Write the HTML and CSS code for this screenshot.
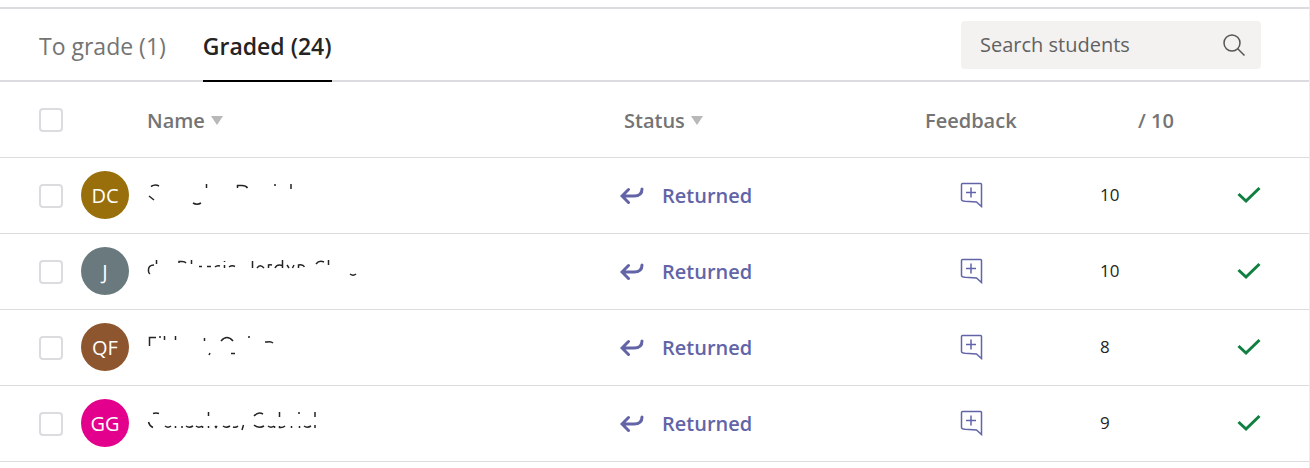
FILE: index.html
```
<!DOCTYPE html>
<html lang="en">

<head>
  <meta charset="UTF-8" />
  <meta name="viewport" content="width=device-width, initial-scale=1.0" />
  <title>Graded</title>
  <link rel="stylesheet" href="styles.css">
</head>

<body>
  <svg class="sprite" aria-hidden="true">
    <symbol id="icon-return" viewBox="0 0 24 18">
      <path d="M8.500 2.500 L2 9 L8.500 15.500 M2.500 9 H14 C19 9 22 6.500 22 2" />
    </symbol>
    <symbol id="icon-feedback" viewBox="0 0 24 26">
      <path d="M2.500 1.500 H20.500 Q21.500 1.500 21.500 2.500 V24.500 L16.500 20 L5 19.300 Q1.500 19 1.500 17.500 V2.500 Q1.500 1.500 2.500 1.500 Z M11 5.500 V15.500 M6 10.500 H16" />
    </symbol>
    <symbol id="icon-check" viewBox="0 0 24 18">
      <path d="M1.500 8 L9 15 L22.500 2" />
    </symbol>
  </svg>

  <main class="container">
    <header class="toolbar">
      <nav class="tabs">
        <button type="button" class="tab">To grade (1)</button>
        <button type="button" class="tab active">Graded (24)</button>
      </nav>
      <form class="search">
        <input type="text" placeholder="Search students" aria-label="Search students" />
        <button type="submit" aria-label="Search">
          <svg viewBox="0 0 24 24" width="24" height="24">
            <circle cx="10" cy="10" r="8" />
            <path d="M15.700 15.700 L22.500 22.500" />
          </svg>
        </button>
      </form>
    </header>

    <table class="grades">
      <colgroup>
        <col class="col-select" />
        <col />
        <col class="col-status" />
        <col class="col-feedback" />
        <col class="col-score" />
        <col class="col-done" />
      </colgroup>
      <thead>
        <tr>
          <th class="select"><input type="checkbox" aria-label="Select all students" /></th>
          <th class="name-head"><button type="button" class="sort">Name <span class="arrow"></span></button></th>
          <th class="status-head"><button type="button" class="sort">Status <span class="arrow"></span></button></th>
          <th class="feedback-head">Feedback</th>
          <th class="score-head">/ 10</th>
          <th></th>
        </tr>
      </thead>
      <tbody>
        <tr>
          <td class="select"><input type="checkbox" aria-label="Select DC" /></td>
          <td>
            <div class="student">
              <span class="avatar gold">DC</span>
              <!-- names are hidden, only the uncovered marks show -->
              <svg class="hidden-name" viewBox="0 0 220 34" width="220" height="34" role="img" aria-label="Hidden name">
                <path d="M11 8.500 Q15 6 19 8 M9 18 L14 22 M53 25 Q57 27.500 61 25 M66.500 6 V10 M97.500 10 V7.500 H102 Q106 7.500 107.500 10 M134 7 H136 M151 6 V11" />
              </svg>
            </div>
          </td>
          <td>
            <a href="#" class="status"><svg class="return"><use href="#icon-return" /></svg>Returned</a>
          </td>
          <td class="feedback"><button type="button" aria-label="Add feedback for DC"><svg><use href="#icon-feedback" /></svg></button></td>
          <td class="score"><input type="text" value="10" aria-label="Points for DC" /></td>
          <td class="done"><svg role="img" aria-label="Done"><use href="#icon-check" /></svg></td>
        </tr>
        <tr>
          <td class="select"><input type="checkbox" aria-label="Select J" /></td>
          <td>
            <div class="student">
              <span class="avatar slate">J</span>
              <svg class="hidden-name" viewBox="0 0 220 34" width="220" height="34" role="img" aria-label="Hidden name">
                <path d="M14 11 Q8 11 8.500 17 Q8.500 19 10 20 M16.500 6 V10 M39 9 V7.500 H42 Q45 7.500 46 9 M51.500 6 V10 M59 12.500 H62 M67 12.500 H71 M75 13 Q77 11 80 12 M84.500 7 V8 M84.500 11 V14 M89 13 Q92 11 95 12.500 M112.500 7 V14 M117 14 Q120 9.500 124 14 M128.500 14 V11 Q130 10.500 132 11 M135 14 Q137 10 142 11.500 M142.500 6 V14 M147 11 L149 14 M154 11 L152.500 14 M158.500 14 V11 Q163 10 164.500 13 M176 10 Q179 6 184 8 M188.500 6 V11 M210 20 Q213 22.500 216 20" />
              </svg>
            </div>
          </td>
          <td>
            <a href="#" class="status"><svg class="return"><use href="#icon-return" /></svg>Returned</a>
          </td>
          <td class="feedback"><button type="button" aria-label="Add feedback for J"><svg><use href="#icon-feedback" /></svg></button></td>
          <td class="score"><input type="text" value="10" aria-label="Points for J" /></td>
          <td class="done"><svg role="img" aria-label="Done"><use href="#icon-check" /></svg></td>
        </tr>
        <tr>
          <td class="select"><input type="checkbox" aria-label="Select QF" /></td>
          <td>
            <div class="student">
              <span class="avatar brown">QF</span>
              <svg class="hidden-name" viewBox="0 0 220 34" width="220" height="34" role="img" aria-label="Hidden name">
                <path d="M9.500 16 V7.500 H16 M19 7 H21 M24.500 6 V10 M35.500 6 V10 M64.500 8 V11 M70 23 L69 25 M81 11 Q87 4 93 11 M91 23.500 H95 M108 7 H110 M125 12 H127 Q131 11 133 13" />
              </svg>
            </div>
          </td>
          <td>
            <a href="#" class="status"><svg class="return"><use href="#icon-return" /></svg>Returned</a>
          </td>
          <td class="feedback"><button type="button" aria-label="Add feedback for QF"><svg><use href="#icon-feedback" /></svg></button></td>
          <td class="score"><input type="text" value="8" aria-label="Points for QF" /></td>
          <td class="done"><svg role="img" aria-label="Done"><use href="#icon-check" /></svg></td>
        </tr>
        <tr>
          <td class="select"><input type="checkbox" aria-label="Select GG" /></td>
          <td>
            <div class="student">
              <span class="avatar pink">GG</span>
              <svg class="hidden-name" viewBox="0 0 220 34" width="220" height="34" role="img" aria-label="Hidden name">
                <path d="M13 7.500 Q16 6.500 19 7.500 M8.500 16 Q9.500 20 13 21.500 M25 20 Q28 22.500 31 20 M35.500 20 V22 M42 20 V22 M46 20 Q49 22.500 53 20 M56 20 Q59 22.500 62 20 M62.500 20 V22 M68.500 6 V10 M68.500 20 V22 M75 20 L76 21.500 L77 20 M83 20 Q86 22.500 90 20 M93 21 Q96 22 98 20 M103.500 19 L102 24 M114 10 Q118 5.500 123 8 M114 19 Q119 23 124 20 M128 20 Q131 22.500 134 20 M134.500 20 V22 M139.500 6 V11 M139.500 20 V21.500 Q143 22 145 20 M151.500 20 V22 M158 7 H160 M159.500 20 V22 M164 20 Q167 22.500 171 20 M175 6 V11 M175 19 V22" />
              </svg>
            </div>
          </td>
          <td>
            <a href="#" class="status"><svg class="return"><use href="#icon-return" /></svg>Returned</a>
          </td>
          <td class="feedback"><button type="button" aria-label="Add feedback for GG"><svg><use href="#icon-feedback" /></svg></button></td>
          <td class="score"><input type="text" value="9" aria-label="Points for GG" /></td>
          <td class="done"><svg role="img" aria-label="Done"><use href="#icon-check" /></svg></td>
        </tr>
      </tbody>
    </table>
  </main>
</body>

</html>
```
FILE: styles.css
```
:root {
  --border: #dcdbe0;
  --text: #252423;
  --muted: #747474;
  --brand: #6264a7;
  --green: #0f8040;
}

* {
  box-sizing: border-box;
}

body {
  margin: 0;
  font-family: "Open Sans", "Noto Sans", sans-serif;
  font-size: 20px;
  color: var(--text);
  background: #fff;
}

button,
input {
  font-family: inherit;
  font-size: inherit;
  color: inherit;
  border: none;
  background: none;
  padding: 0;
}

button {
  cursor: pointer;
}

svg {
  display: block;
  fill: none;
  stroke: currentColor;
}

.sprite {
  display: none;
}

.container {
  min-height: 100vh;
  padding-top: 7px;
  border-right: 1px solid #ebebeb;
}

.toolbar {
  display: flex;
  justify-content: space-between;
  align-items: center;
  height: 75px;
  padding: 0 48px 0 39px;
  border-top: 2px solid var(--border);
  border-bottom: 2px solid var(--border);
}

.tabs {
  display: flex;
  align-self: stretch;
  gap: 37px;
  margin-bottom: -2px;
}

.tab {
  padding-top: 2px;
  font-size: 23px;
  color: var(--muted);
  border-bottom: 2px solid transparent;
}

.tab.active {
  font-weight: 600;
  color: var(--text);
  border-color: #000;
}

.search {
  display: flex;
  align-items: center;
  width: 300px;
  height: 48px;
  padding: 0 15px 0 19px;
  background: #f3f2f1;
  border-radius: 4px;
}

.search input {
  flex: 1;
  min-width: 0;
  outline: none;
}

.search input::placeholder {
  color: #616161;
  opacity: 1;
}

.search button {
  color: #555;
}

.search svg {
  stroke-width: 1.5;
}

.grades {
  width: 100%;
  table-layout: fixed;
  border-collapse: separate;
  border-spacing: 0;
}

.col-select {
  width: 81px;
}

.col-status {
  width: 300px;
}

.col-feedback {
  width: 180px;
}

.col-score {
  width: 110px;
}

.col-done {
  width: 99px;
}

th,
td {
  height: 76px;
  padding: 0 0 2px;
  text-align: left;
  border-bottom: 1px solid #dcdcdc;
}

th {
  padding: 2px 0 0;
  font-weight: 600;
  color: var(--muted);
}

.sort {
  display: flex;
  align-items: center;
  gap: 6px;
  font-weight: 600;
}

.arrow {
  border: 6px solid transparent;
  border-top: 9px solid #b8b8b8;
  border-bottom: none;
}

.select {
  padding: 0 0 0 39px;
}

.select input {
  display: block;
  appearance: none;
  width: 24px;
  height: 24px;
  margin: 0;
  border: 2px solid var(--border);
  border-radius: 4px;
}

.name-head {
  padding-left: 66px;
}

.status-head {
  padding-left: 4px;
}

.feedback-head {
  padding-left: 5px;
}

.score-head {
  padding-left: 38px;
}

.student {
  display: flex;
  align-items: center;
  gap: 11px;
}

.avatar {
  display: flex;
  justify-content: center;
  align-items: center;
  width: 48px;
  height: 48px;
  padding-top: 2px;
  border-radius: 50%;
  color: #fff;
}

.gold {
  background: #986f0b;
}

.slate {
  background: #69797e;
}

.brown {
  background: #8e562e;
}

.pink {
  background: #e3008c;
}

.hidden-name {
  stroke-width: 1.5;
}

.status {
  display: flex;
  align-items: center;
  gap: 18px;
  padding-top: 2px;
  font-weight: 600;
  color: var(--brand);
  text-decoration: none;
}

.return {
  width: 24px;
  height: 18px;
  stroke-width: 3;
  stroke-linecap: round;
}

.feedback {
  padding-left: 40px;
  color: var(--brand);
}

.feedback button {
  display: block;
}

.feedback svg {
  width: 24px;
  height: 26px;
  stroke-width: 1.5;
}

.score input {
  display: block;
  width: 60px;
  font-size: 17px;
  font-weight: 500;
}

.done {
  padding-left: 27px;
  color: var(--green);
}

.done svg {
  width: 24px;
  height: 18px;
  stroke-width: 3;
}
```
